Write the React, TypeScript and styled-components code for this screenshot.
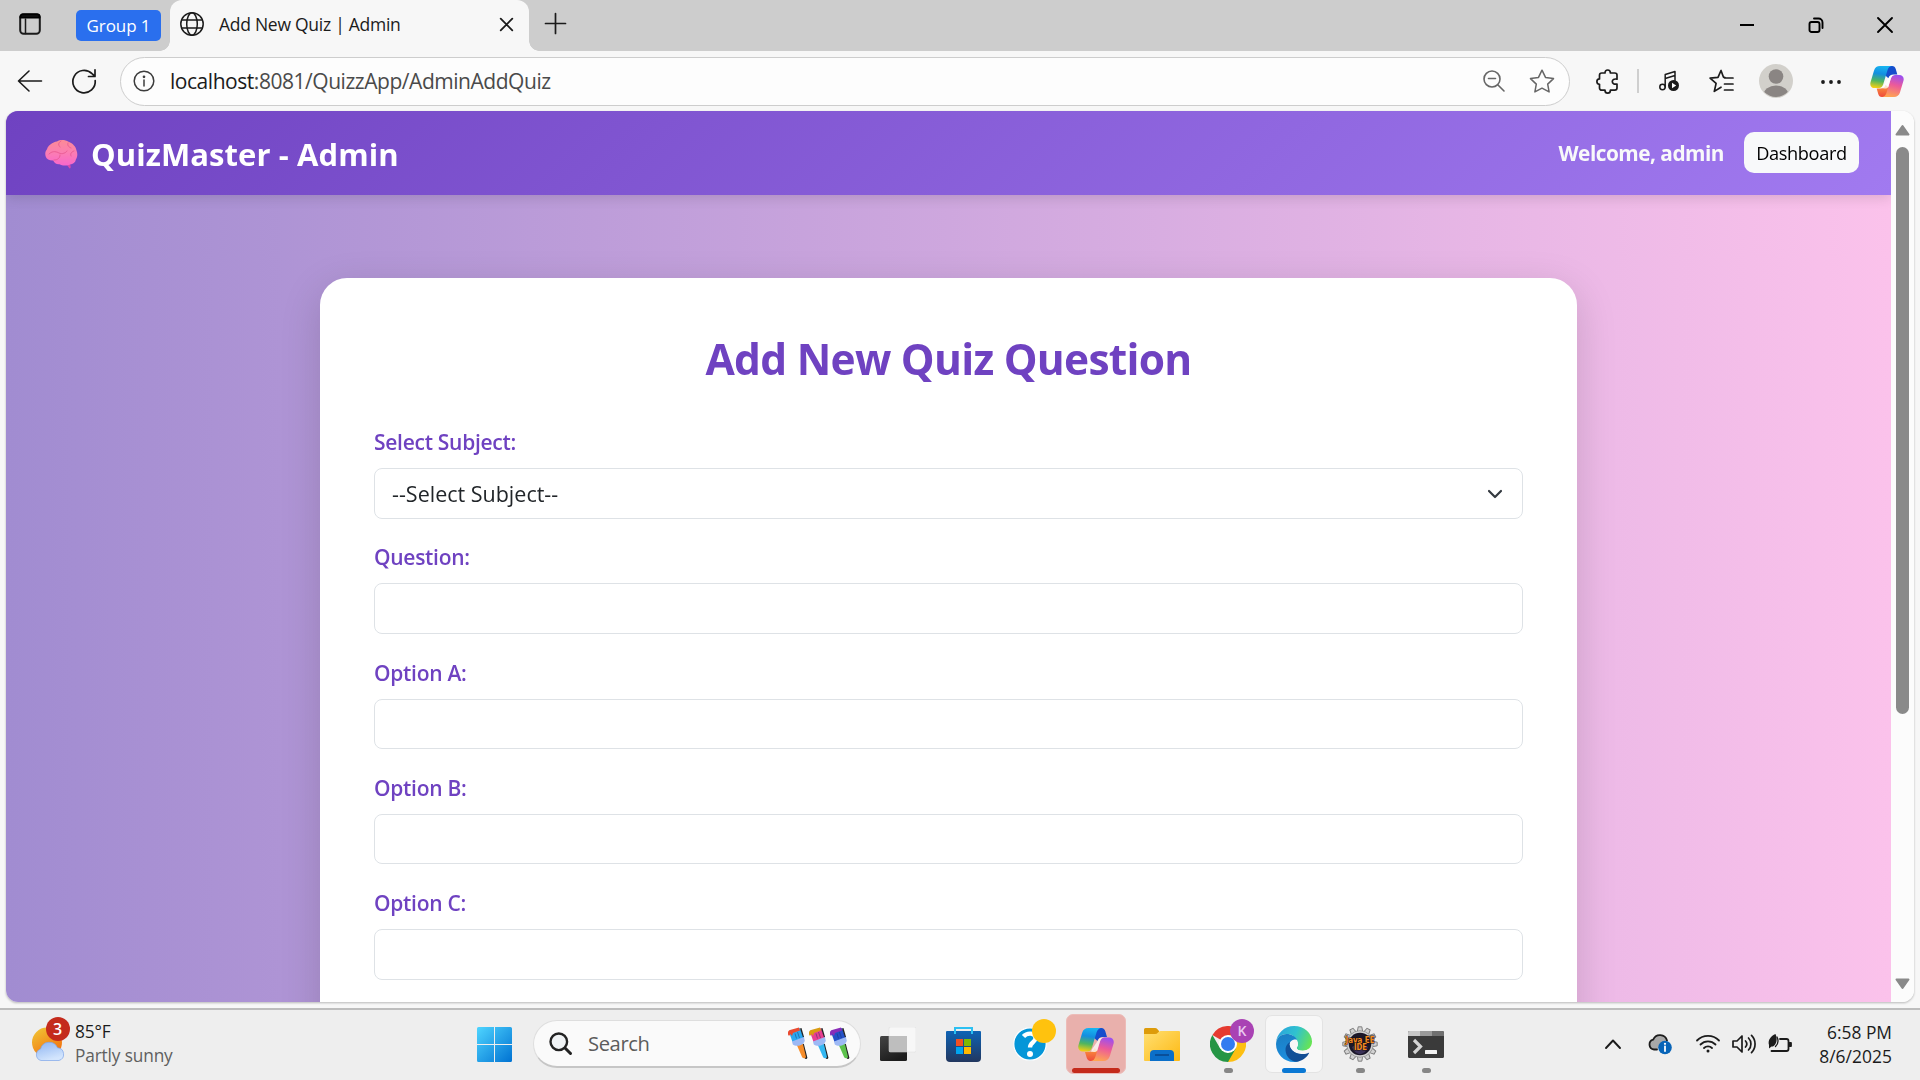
import React from "react";
import styled, { createGlobalStyle, css } from "styled-components";

const Global = createGlobalStyle`
  * { box-sizing: border-box; }
  html, body { margin: 0; padding: 0; }
  body { width: 1920px; height: 1080px; overflow: hidden; font-family: "Open Sans", "Noto Sans", sans-serif; }
  svg { display: block; flex: none; }
`;

const Screen = styled.div`
  width: 1920px;
  height: 1080px;
  display: flex;
  flex-direction: column;
  background: #f7f7f7;
  overflow: hidden;
`;

const Label = styled.span<{ $size: number; $color?: string; $weight?: number; $track?: number }>`
  font-size: ${(p) => p.$size}px;
  color: ${(p) => p.$color ?? "#1b1b1b"};
  font-weight: ${(p) => p.$weight ?? 400};
  letter-spacing: ${(p) => p.$track ?? 0}px;
  line-height: 24px;
  white-space: pre;
`;

/* ---------- tab strip ---------- */
const TabStrip = styled.header`
  flex: none;
  height: 51px;
  display: flex;
  align-items: flex-start;
  background: #cdcdcd;
  padding-left: 19px;
`;
const StripIcon = styled.div<{ $top: number; $left?: number }>`
  padding-top: ${(p) => p.$top}px;
  margin-left: ${(p) => p.$left ?? 0}px;
`;
const GroupChip = styled.div`
  width: 85px;
  height: 31px;
  margin: 10px 9px 0 35px;
  border-radius: 5px;
  background: #2a6fee;
  display: flex;
  align-items: center;
  justify-content: center;
`;
const Tab = styled.div`
  position: relative;
  width: 359px;
  height: 51px;
  padding: 12px 16px 0 10px;
  display: flex;
  align-items: flex-start;
  border-radius: 12px 12px 0 0;
  background: #f7f7f7;
  &::before, &::after {
    content: "";
    position: absolute;
    bottom: 0;
    width: 10px;
    height: 10px;
  }
  &::before { left: -10px; background: radial-gradient(circle at 0 0, transparent 9.5px, #f7f7f7 10px); }
  &::after { right: -10px; background: radial-gradient(circle at 100% 0, transparent 9.5px, #f7f7f7 10px); }
`;
const TabTitle = styled.div`
  flex: 1;
  margin-left: 15px;
`;
const TabClose = styled.div`
  padding-top: 6px;
`;
const WindowControls = styled.div`
  margin-left: auto;
  padding: 17px 27px 0 0;
  display: flex;
  gap: 53px;
`;

/* ---------- toolbar ---------- */
const Toolbar = styled.nav`
  flex: none;
  height: 60px;
  display: flex;
  align-items: center;
  padding: 0 14px 0 17px;
`;
const AddressBar = styled.div`
  width: 1450px;
  height: 49px;
  margin: 0 25px 0 23px;
  border: 1.5px solid #cdcdcd;
  border-radius: 25px;
  background: #fdfdfd;
  display: flex;
  align-items: center;
  padding: 0 14px 0 12px;
`;
const Url = styled.div`
  flex: 1;
  margin-left: 15px;
`;
const ToolbarIcon = styled.div<{ $left: number }>`
  margin-left: ${(p) => p.$left}px;
`;
const Divider = styled.div`
  width: 2px;
  height: 24px;
  margin-left: 19px;
  background: #cfcfcf;
`;

/* ---------- page ---------- */
const Viewport = styled.main`
  flex: none;
  height: 891px;
  margin: 0 6px;
  display: flex;
  border-radius: 12px;
  overflow: hidden;
  background: #fff;
`;
const ViewportFrame = styled.div`
  flex: none;
  height: 897px;
  filter: drop-shadow(0 1px 1px rgba(0, 0, 0, 0.25));
`;
const Page = styled.div`
  width: 1885px;
  height: 891px;
  display: flex;
  flex-direction: column;
  background: linear-gradient(to right, #a18cd1, #fbc2eb);
  overflow: hidden;
`;
const Navbar = styled.div`
  flex: none;
  height: 84px;
  display: flex;
  align-items: center;
  padding: 0 32px 0 39px;
  background: linear-gradient(135deg, #6f42c1, #a17af0);
  box-shadow: 0 3px 12px rgba(0, 0, 0, 0.12);
`;
const Brand = styled.div`
  flex: 1;
  display: flex;
  align-items: center;
  gap: 13px;
  padding-top: 2px;
`;
const DashboardButton = styled.button`
  width: 115px;
  height: 41px;
  margin: 0 0 2px 20px;
  padding: 1px 0 0;
  border: 0;
  border-radius: 10px;
  background: #f8f9fa;
  font-family: inherit;
`;
const Card = styled.form`
  flex: none;
  width: 1257px;
  height: 1100px;
  margin: 83px 0 0 314px;
  padding: 55px 54px;
  border-radius: 27px;
  background: #fff;
  box-shadow: 0 11px 40px rgba(0, 0, 0, 0.15);
`;
const Title = styled.h1`
  margin: 0 0 37px;
  height: 52px;
  display: flex;
  align-items: center;
  justify-content: center;
`;
const Field = styled.div`
  height: 115.25px;
  padding-top: 8px;
  display: flex;
  flex-direction: column;
`;
const FieldLabel = styled.label`
  height: 24px;
  margin: 0 0 14px;
`;
const Control = styled.div`
  height: 50.5px;
  display: flex;
  align-items: center;
  justify-content: space-between;
  padding: 1px 19px 0 17px;
  border: 1px solid #dee2e6;
  border-radius: 8px;
  background: #fff;
`;
const Scrollbar = styled.div`
  width: 23px;
  background: #fcfcfc;
  display: flex;
  flex-direction: column;
  align-items: center;
  justify-content: space-between;
  padding: 13px 1px 12px 0;
`;
const Thumb = styled.div`
  width: 13px;
  height: 567px;
  margin: 11px 0 auto;
  border-radius: 7px;
  background: #8a8a8a;
`;

/* ---------- taskbar ---------- */
const Taskbar = styled.footer`
  flex: none;
  height: 72px;
  border-top: 2px solid #bdbdbd;
  padding-bottom: 2px;
  background: #eeeeee;
  display: flex;
  align-items: center;
`;
const Weather = styled.div`
  width: 461px;
  padding-left: 32px;
  display: flex;
  align-items: center;
`;
const Lines = styled.div<{ $end?: boolean }>`
  display: flex;
  flex-direction: column;
  ${(p) => p.$end && css`align-items: flex-end;`}
`;
const Slot = styled.div`
  position: relative;
  width: 66px;
  height: 68px;
  display: flex;
  align-items: center;
  justify-content: center;
`;
const Tile = styled.div<{ $w: number; $h: number; $bg: string; $edge: string }>`
  width: ${(p) => p.$w}px;
  height: ${(p) => p.$h}px;
  display: flex;
  align-items: center;
  justify-content: center;
  border-radius: 7px;
  background: ${(p) => p.$bg};
  border: 1px solid ${(p) => p.$edge};
`;
const Indicator = styled.div<{ $w: number; $c: string }>`
  position: absolute;
  bottom: 5px;
  left: 50%;
  width: ${(p) => p.$w}px;
  height: 5px;
  margin-left: ${(p) => -p.$w / 2}px;
  border-radius: 3px;
  background: ${(p) => p.$c};
`;
const Badge = styled.div<{ $bg: string; $x: number; $y: number }>`
  position: absolute;
  left: ${(p) => p.$x}px;
  top: ${(p) => p.$y}px;
  width: 24px;
  height: 24px;
  border-radius: 50%;
  background: ${(p) => p.$bg};
  display: flex;
  align-items: center;
  justify-content: center;
`;
const WeatherIcon = styled.div`
  position: relative;
  margin-right: 10px;
`;
const SearchBox = styled.div`
  width: 328px;
  height: 48px;
  margin: 0 4px 0 6px;
  padding: 0 10px 0 15px;
  display: flex;
  align-items: center;
  border: 1.5px solid #dedede;
  border-bottom: 2px solid #c6c6c6;
  border-radius: 24px;
  background: #fafafa;
`;
const SearchText = styled.div`
  flex: 1;
  margin-left: 16px;
`;
const Tray = styled.div`
  margin-left: auto;
  padding-right: 28px;
  display: flex;
  align-items: center;
`;
const TrayIcon = styled.div<{ $gap: number }>`
  margin-right: ${(p) => p.$gap}px;
`;
const Clock = styled(Lines)`
  width: 75px;
`;

type IconProps = { w: number; h: number; children: React.ReactNode; stroke?: string; sw?: number };
const Icon = ({ w, h, children, stroke = "#1b1b1b", sw = 1.6 }: IconProps) => (
  <svg width={w} height={h} viewBox={`0 0 ${w} ${h}`} fill="none" stroke={stroke} strokeWidth={sw} strokeLinecap="round" strokeLinejoin="round" overflow="visible">
    {children}
  </svg>
);

const Copilot = ({ id, w, h }: { id: string; w: number; h: number }) => (
  <svg width={w} height={h} viewBox="0 0 36 33">
    <defs>
      <linearGradient id={id + "a"} x1="0.5" y1="0" x2="0.35" y2="1">
        <stop offset="0" stopColor="#18b4f0" /><stop offset="0.35" stopColor="#138ee0" /><stop offset="0.68" stopColor="#4fb560" /><stop offset="1" stopColor="#f5cf12" />
      </linearGradient>
      <linearGradient id={id + "b"} x1="0.65" y1="0" x2="0.4" y2="1">
        <stop offset="0" stopColor="#9b4ff0" /><stop offset="0.45" stopColor="#ec5a9a" /><stop offset="1" stopColor="#ffa552" />
      </linearGradient>
      <linearGradient id={id + "c"} x1="0" y1="0" x2="1" y2="1">
        <stop offset="0" stopColor="#0f52d0" /><stop offset="1" stopColor="#1b49c9" />
      </linearGradient>
      <linearGradient id={id + "d"} x1="0" y1="0" x2="0" y2="1">
        <stop offset="0" stopColor="#fb9a3c" /><stop offset="1" stopColor="#ef4a3d" />
      </linearGradient>
    </defs>
    <path d="M17 0h6.500c2 0 3.200 1.300 3.800 3.200L29 9h-4c-3 0-4.600 1.200-5.500 4L15 9z" fill={`url(#${id}c)`} />
    <path d="M19 33h-6.500c-2 0-3.200-1.300-3.800-3.200L7 24h4c3 0 4.600-1.200 5.500-4L21 24z" fill={`url(#${id}d)`} />
    <path d="M10.500 0H23c-2.200.3-3.700 2-4.400 4.300l-4.600 15.200c-.8 2.500-2.200 4-4.500 4H5C1.500 23.500-.4 21 .4 17.500L4.200 4.700C5.200 1.500 7.400 0 10.500 0z" fill={`url(#${id}a)`} />
    <path d="M25.500 33H13c2.200-.3 3.700-2 4.400-4.300l4.600-15.200c.8-2.500 2.200-4 4.500-4H31c3.500 0 5.400 2.500 4.600 6l-3.800 12.800c-1 3.200-3.200 4.700-6.300 4.700z" fill={`url(#${id}b)`} />
    <path d="M20.300 12c.9-1.800 2.400-2.500 4.700-2.500l1.500 0c-2.300 0-3.700 1.500-4.500 4l-2.700 9c-.8 1-1.800 1.500-3.600 1.500l-2.700-.3c.5-.8.8-1.600 1-2.500z" fill="#fff" fillOpacity=".75" />
  </svg>
);

const Brain = () => (
  <svg width="33" height="29" viewBox="0 0 33 29">
    <defs>
      <linearGradient id="brainFill" x1="0.5" y1="0" x2="0.5" y2="1">
        <stop offset="0" stopColor="#fb8b96" /><stop offset="0.5" stopColor="#fb7db3" /><stop offset="1" stopColor="#f866cc" />
      </linearGradient>
    </defs>
    <path d="M20.500 23l4 5.600c1.200-.3 1.500-1.600 1-2.800l-.8-4z" fill="#d94aac" />
    <path d="M12 1.500C15.500-.5 20-.3 23.500 1.800 28 3.500 31 7 31.500 10.500c1.300 3 1 6.500-.5 8.800-.6 3.200-3 5-6 5.200-3 1.600-8 1.400-10.500-.3-3 .3-5.300-1.200-6.300-3.800-3.600.2-6.700-1.200-7.500-4C-.3 13.500.5 11 2 9.200 3 5.500 7.500 2 12 1.500z" fill="url(#brainFill)" />
    <g fill="none" stroke="#e85a92" strokeWidth="0.9" strokeLinecap="round">
      <path d="M4 14c4-4 8-2 10-1 3 1.500 7 0 8-2M16 1c-3 2-3 4-1 6M23 3c-1 3 1 4 3 5M29 11c-3 1-4 3-3 5M9 20c4 0 6-2 6-5" />
    </g>
  </svg>
);

const Brush = ({ head, drip, handle }: { head: string; drip: string; handle: string }) => (
  <svg width="21" height="33" viewBox="0 0 21 33">
    <path d="M12 17.500l4-1 3.600 14c-.6 1.600-2.200 1.500-2.800.3z" fill="#222" transform="translate(.8 .3)" />
    <path d="M9.800 18l6-1.500L19 30c-.6 1.700-3 1.600-3.800.3z" fill={handle} />
    <path d="M2 5L13 1l4 10-11.500 4z" fill={head} />
    <path d="M1 7.500V5.500c0-1.500 1-2.200 2-2.600L12 .6l1 3-7 2.400-1 3-1.500-2L2 9z" fill={drip} />
    <path d="M13 1.500l1.500-.5 2.500 9-1 .5z" fill="#222" />
    <path d="M5 14.500l12-4.500.8 4c-1 2.400-2.600 3.800-5 4.500-2.300.6-5.600.4-7-1z" fill="#9db9f5" />
    <path d="M8 6.500l1.500 5M10.500 5l2 6" stroke="#15306a" strokeOpacity=".45" fill="none" />
  </svg>
);

const Gear = () => {
  const teeth = Array.from({ length: 12 }, (_, i) => i * 30);
  return (
    <svg width="36" height="36" viewBox="0 0 36 36">
      {teeth.map((a) => (
        <path key={a} d="M15.300 5.500L16.200.8h3.600l.9 4.700z" fill="#d2d2d2" stroke="#777" strokeWidth="0.9" transform={`rotate(${a} 18 18)`} />
      ))}
      <circle cx="18" cy="18" r="13.300" fill="#d2d2d2" stroke="#888" strokeWidth="0.700" />
      <circle cx="18" cy="18" r="11.300" fill="#1b1728" />
      <path d="M10 21c4-3 12-3 16 0-2 5-5 7-8 7s-6-2-8-7z" fill="#3a3157" />
      <text x="18" y="16.500" textAnchor="middle" textLength="29" lengthAdjust="spacingAndGlyphs" fontSize="8" fontWeight="700" fontFamily="DejaVu Sans" fill="#f58a1f" stroke="#1b1010" strokeWidth="1" paintOrder="stroke">Java EE</text>
      <text x="18.500" y="24" textAnchor="middle" textLength="13" lengthAdjust="spacingAndGlyphs" fontSize="8" fontWeight="700" fontFamily="DejaVu Sans" fill="#f58a1f" stroke="#1b1010" strokeWidth="1" paintOrder="stroke">IDE</text>
    </svg>
  );
};

const Edge = () => (
  <svg width="36" height="36" viewBox="0 0 36 36">
    <defs>
      <linearGradient id="edTop" x1="0" y1="0.3" x2="1" y2="0.6"><stop offset="0" stopColor="#2aa3dd" /><stop offset="0.5" stopColor="#30c2cf" /><stop offset="1" stopColor="#67e454" /></linearGradient>
      <linearGradient id="edMid" x1="0.3" y1="0" x2="0.5" y2="1"><stop offset="0" stopColor="#1b7fc4" /><stop offset="1" stopColor="#1d8fe0" /></linearGradient>
      <linearGradient id="edLow" x1="0" y1="0" x2="1" y2="1"><stop offset="0" stopColor="#10529c" /><stop offset="1" stopColor="#134c92" /></linearGradient>
    </defs>
    <path d="M0 17C.6 7.500 8.500 0 18 0c10.500 0 18 7.500 18 15.500 0 5.500-4 9.300-9.300 9.300-4 0-6-1.500-6-2.800 0-1 1.300-1.600 1.300-4C22 13 17 8 10.500 8 5 8 1 11.500 0 17z" fill="url(#edTop)" />
    <path d="M0 18C.5 11.500 5 8 10.500 8c5 0 9 2.500 10.800 6-4-1.500-7.600 1.500-8 5-.8 7 4 14 12 14.400C23 35 20.500 36 18 36 8 36 0 28 0 18z" fill="url(#edMid)" />
    <path d="M13.800 16c-3 2-4.600 5-4.300 8.500C10 31 15 35.500 20.500 35.800c5.500-.8 10-4 12.500-8.600.4-.9-.2-1.200-.9-.9-2 1-4.300 1.500-6.600 1.300-7-.4-12.500-5-11.700-11.600z" fill="url(#edLow)" />
    <path d="M17.500 14.200c2.500-.5 4.500 1.300 4.500 3.800 0 2.400-1.300 3-1.300 4 0 1.300 2 2.800 6 2.800 2.800 0 5-.8 6.300-2l.2 3.600c-2.500 1.300-5 1.700-7.700 1.500-7-.6-11.700-5-11.700-9.500 0-2.200 1.600-3.900 3.700-4.200z" fill="#f7f7f7" />
  </svg>
);

const App = () => (
  <Screen>
    <Global />
    <TabStrip>
      <StripIcon $top={13}>
        <Icon w={22} h={22} sw={2}><rect x="1.200" y="1.200" width="19.600" height="19.600" rx="3.500" /><path d="M1.500 4.500V3.500a2 2 0 0 1 2-2h15a2 2 0 0 1 2 2v1z" fill="#1b1b1b" stroke="#000" /><path d="M6.500 6v14.500" strokeWidth="1.500" /></Icon>
      </StripIcon>
      <GroupChip><Label $size={17} $track={-0.1} $color="#fff">Group 1</Label></GroupChip>
      <Tab>
        <Icon w={24} h={24} sw={1.5}><circle cx="12" cy="12" r="11.200" /><ellipse cx="12" cy="12" rx="5.300" ry="11.200" /><path d="M1.800 8h20.400M1.800 16h20.400" /></Icon>
        <TabTitle><Label $size={17.5} $track={-0.27}>Add New Quiz | Admin</Label></TabTitle>
        <TabClose><Icon w={13} h={13} sw={1.8}><path d="M.7.7l11.600 11.600M12.300.7L.7 12.300" /></Icon></TabClose>
      </Tab>
      <StripIcon $top={13} $left={16}><Icon w={21} h={21} sw={1.7}><path d="M10.500.5v20M.5 10.500h20" /></Icon></StripIcon>
      <WindowControls>
        <Icon w={16} h={16} stroke="#000" sw={2}><path d="M1 8h14" strokeLinecap="butt" /></Icon>
        <Icon w={16} h={16} stroke="#000" sw={1.9}><rect x="1.500" y="5" width="10" height="10" rx="2" /><path d="M6 1.500h4.500a4 4 0 0 1 4 4V11" /></Icon>
        <Icon w={16} h={16} stroke="#000" sw={1.9}><path d="M1 1l14 14M15 1L1 15" /></Icon>
      </WindowControls>
    </TabStrip>

    <Toolbar>
      <Icon w={26} h={24} sw={1.6}><path d="M24.500 12H1.500M12 2L1.500 12 12 22" /></Icon>
      <ToolbarIcon $left={29}><Icon w={25} h={25} sw={1.7}><path d="M23.200 11.500A11.200 11.200 0 1 1 20 4.700l2.600 2.300M23 .8V7.500h-6.500" /></Icon></ToolbarIcon>
      <AddressBar>
        <Icon w={22} h={22} stroke="#3c3c3c" sw={1.5}><circle cx="11" cy="11" r="9.800" /><path d="M11 10v6" /><circle cx="11" cy="6.800" r=".6" fill="#3c3c3c" /></Icon>
        <Url><Label $size={21} $track={-0.46}>localhost</Label><Label $size={21} $track={-0.46} $color="#4a4a4a">:8081/QuizzApp/AdminAddQuiz</Label></Url>
        <Icon w={22} h={22} stroke="#666" sw={1.6}><circle cx="9" cy="9" r="8" /><path d="M15 15l6 6M5.500 8.500h7" /></Icon>
        <ToolbarIcon $left={24}><Icon w={26} h={24} stroke="#666" sw={1.5}><path d="M13 1.200l3.500 7.200 8 1.200-5.800 5.500 1.400 7.800L13 19.200l-7.100 3.700 1.400-7.800L1.500 9.600l8-1.200z" /></Icon></ToolbarIcon>
      </AddressBar>
      <ToolbarIcon $left={1}><Icon w={22} h={25} sw={1.7}><path d="M5.800 4h3.200c0-2 1-3 2.700-3s2.700 1 2.700 3h4.300c1.300 0 2.300.8 2.300 2v4.200c-3-.6-4.700.4-4.700 2.400s1.700 3 4.700 2.400V19c0 1.300-1 2.200-2.300 2.200h-4.300c0 2-1 3-2.700 3s-2.700-1-2.700-3H5.800C4.500 21.200 3.500 20.300 3.500 19v-3.700C2 15.300.9 14.300.9 12.600S2 9.900 3.500 9.900V6.200C3.500 5 4.500 4 5.800 4z" /></Icon></ToolbarIcon>
      <Divider />
      <ToolbarIcon $left={20}>
        <Icon w={21} h={22} sw={1.5}><circle cx="3.500" cy="17" r="2.700" /><path d="M6.200 17V4.500L16 1.500v9M6.200 8.500L16 5.500" /><circle cx="14.500" cy="15.500" r="5.500" fill="#1b1b1b" stroke="none" /><path d="M13 12.800v5.400l4.200-2.700z" fill="#fff" stroke="none" /></Icon>
      </ToolbarIcon>
      <ToolbarIcon $left={29}>
        <Icon w={25} h={24} sw={1.7}><path d="M16 8.500l-1.500-.3L12 1.500 9 8.400l-7.900.8 6 5.200-1.800 8L12 18.200M15.500 9h8.500M15.500 15h8.500M15.500 21h8.500" /></Icon>
      </ToolbarIcon>
      <ToolbarIcon $left={25}>
        <svg width="34" height="34" viewBox="0 0 34 34"><defs><clipPath id="av"><circle cx="17" cy="17" r="16" /></clipPath></defs><circle cx="17" cy="17" r="17" fill="#d2d0cb" /><circle cx="17" cy="12.500" r="7.300" fill="#8a8583" /><ellipse cx="17" cy="31" rx="12.500" ry="9.500" fill="#8a8583" clipPath="url(#av)" /></svg>
      </ToolbarIcon>
      <ToolbarIcon $left={28}><Icon w={20} h={6} stroke="none"><g fill="#1b1b1b"><circle cx="2" cy="4" r="1.900" /><circle cx="10" cy="4" r="1.900" /><circle cx="18" cy="4" r="1.900" /></g></Icon></ToolbarIcon>
      <ToolbarIcon $left={29}><Copilot id="tb" w={34} h={31} /></ToolbarIcon>
    </Toolbar>

    <ViewportFrame>
      <Viewport>
        <Page>
          <Navbar>
            <Brand><Brain /><Label $size={31} $track={0.08} $weight={700} $color="#fff">QuizMaster - Admin</Label></Brand>
            <Label $size={20.8} $track={-0.5} $weight={700} $color="#f8f9fa">Welcome, admin</Label>
            <DashboardButton type="button"><Label $size={18.2} $track={-0.38} $color="#000">Dashboard</Label></DashboardButton>
          </Navbar>
          <Card>
            <Title><Label $size={42.5} $track={-0.73} $weight={700} $color="#6f42c1">Add New Quiz Question</Label></Title>
            {["Select Subject:", "Question:", "Option A:", "Option B:", "Option C:"].map((name, i) => (
              <Field key={name}>
                <FieldLabel><Label $size={21} $track={-0.28} $weight={600} $color="#6f42c1">{name}</Label></FieldLabel>
                <Control>
                  {i === 0 && (
                    <>
                      <Label $size={21.5} $color="#212529">--Select Subject--</Label>
                      <Icon w={16} h={10} stroke="#343a40" sw={2.2}><path d="M2 2l6 6 6-6" /></Icon>
                    </>
                  )}
                </Control>
              </Field>
            ))}
          </Card>
        </Page>
        <Scrollbar>
          <svg width="15" height="12" viewBox="0 0 15 12"><path d="M7.500 2L13.500 10.500h-12z" fill="#8a8a8a" stroke="#8a8a8a" strokeWidth="2" strokeLinejoin="round" /></svg>
          <Thumb />
          <svg width="15" height="12" viewBox="0 0 15 12"><path d="M7.500 10L13.500 1.500h-12z" fill="#8a8a8a" stroke="#8a8a8a" strokeWidth="2" strokeLinejoin="round" /></svg>
        </Scrollbar>
      </Viewport>
    </ViewportFrame>

    <Taskbar>
      <Weather>
        <WeatherIcon>
          <svg width="33" height="34" viewBox="0 0 33 34">
            <defs>
              <linearGradient id="sun" x1="0.2" y1="0" x2="0.8" y2="1"><stop offset="0" stopColor="#f0c233" /><stop offset="1" stopColor="#f2680c" /></linearGradient>
              <linearGradient id="cloud" x1="0" y1="0" x2="0.4" y2="1"><stop offset="0" stopColor="#8db4f2" /><stop offset="1" stopColor="#d3e5fd" /></linearGradient>
            </defs>
            <circle cx="15" cy="15.500" r="15" fill="url(#sun)" />
            <path d="M9 33.500a6 6 0 0 1-.5-11.500 9 9 0 0 1 17-1.200A6.500 6.500 0 0 1 27 33.500z" fill="url(#cloud)" stroke="#7da5ea" strokeWidth=".7" />
          </svg>
          <Badge $bg="#c42b1c" $x={13.5} $y={-10}><Label $size={16} $color="#fff" $weight={600}>3</Label></Badge>
        </WeatherIcon>
        <Lines><Label $size={17.3} $track={-0.15}>85°F</Label><Label $size={17.3} $track={-0.15} $color="#5f5f5f">Partly sunny</Label></Lines>
      </Weather>
      <Slot>
        <svg width="35" height="35" viewBox="0 0 35 35">
          <defs><linearGradient id="win" x1="0" y1="0" x2="1" y2="1" gradientUnits="objectBoundingBox"><stop offset="0" stopColor="#4fd5ff" /><stop offset="1" stopColor="#0072d2" /></linearGradient></defs>
          <path d="M1.500 0H17v17H0V1.500Q0 0 1.500 0zM18 0h15.500Q35 0 35 1.500V17H18zM0 18h17v17H1.500Q0 35 0 33.500zM18 18h17v15.500q0 1.500-1.500 1.500H18z" fill="url(#win)" />
        </svg>
      </Slot>
      <SearchBox>
        <Icon w={23} h={23} stroke="#222" sw={2.4}><circle cx="9.800" cy="9.800" r="8.300" fill="#f0f3f5" /><path d="M16 16l5.500 5.500" strokeWidth="3" /></Icon>
        <SearchText><Label $size={20.2} $track={-0.4} $color="#5c5c5c">Search</Label></SearchText>
        <Brush head="#2ba8f0" drip="#ea4a30" handle="#f78d2a" />
        <Brush head="#e83e90" drip="#d99b12" handle="#34b8f2" />
        <Brush head="#2450c8" drip="#8a2cb8" handle="#5cc24c" />
      </SearchBox>
      <Slot>
        <svg width="36" height="34" viewBox="0 0 36 34">
          <defs><linearGradient id="tv" x1="0" y1="0" x2="0.5" y2="1"><stop offset="0" stopColor="#444" /><stop offset="1" stopColor="#1c1c1c" /></linearGradient></defs>
          <rect y="9" width="27" height="25" rx="1.500" fill="url(#tv)" /><rect x="9" width="27" height="25" rx="1.500" fill="#f7f7f7" stroke="#dcdcdc" strokeWidth=".5" /><path d="M9 9h18v16H10.500Q9 25 9 23.500z" fill="#bebebe" />
        </svg>
      </Slot>
      <Slot>
        <svg width="36" height="35" viewBox="0 0 36 35">
          <defs><linearGradient id="st" x1="0" y1="0" x2="0" y2="1"><stop offset="0" stopColor="#0e63b5" /><stop offset="1" stopColor="#22375f" /></linearGradient></defs>
          <path d="M0 5q0-1 1-1h33q1 0 1 1v26q0 4-4 4H4q-4 0-4-4z" fill="url(#st)" /><path d="M9 7V1h17v6" fill="none" stroke="#2bc0f2" strokeWidth="2" />
          <path d="M10 12h7v7h-7z" fill="#f25022" /><path d="M18 12h7v7h-7z" fill="#7fba00" /><path d="M10 20h7v7h-7z" fill="#00a4ef" /><path d="M18 20h7v7h-7z" fill="#ffb900" />
        </svg>
      </Slot>
      <Slot>
        <svg width="34" height="34" viewBox="0 0 34 34"><circle cx="17" cy="17" r="16.200" fill="#0596d8" stroke="#fff" strokeWidth="1.200" /><path d="M10.500 9.500C14 5.500 22.500 5.500 22.500 11c0 4.500-5.500 4.500-5.500 9.500" fill="none" stroke="#fff" strokeWidth="4.300" /><circle cx="17" cy="27" r="3" fill="#fff" /></svg>
        <Badge $bg="#ffc20e" $x={35} $y={9} />
      </Slot>
      <Slot>
        <Tile $w={60} $h={60} $bg="#e9b0ac" $edge="#edbcb8"><Copilot id="tk" w={36} h={33} /></Tile>
        <Indicator $w={48} $c="#c42b1c" />
      </Slot>
      <Slot>
        <svg width="36" height="33" viewBox="0 0 36 33">
          <defs><linearGradient id="fo" x1="0" y1="0" x2="1" y2="1"><stop offset="0" stopColor="#ffdf72" /><stop offset="1" stopColor="#fdb913" /></linearGradient></defs>
          <path d="M0 1.500Q0 0 1.500 0H11q1.500 0 2.500 1.200L15 3v4H0z" fill="#dd9b0a" /><path d="M0 6h11q2 0 3-1.500T16.500 3H35q1 0 1 1v28q0 1-1 1H1q-1 0-1-1z" fill="url(#fo)" /><path d="M6 33v-7q0-4 4-4h16q4 0 4 4v7z" fill="#0b6fc9" /><path d="M11 27h14" stroke="#0a4c93" strokeWidth="1.800" />
        </svg>
      </Slot>
      <Slot>
        <svg width="36" height="36" viewBox="0 0 36 36">
          <path d="M18 18L2.400 9A18 18 0 0 1 33.600 9z" fill="#e53a30" /><path d="M18 18V9h15.600A18 18 0 0 1 18 36z" fill="#fdbf12" /><path d="M2.400 9l7.800 13.500L18 27l7.800-4.500L18 36A18 18 0 0 1 2.400 9z" fill="#259545" /><circle cx="18" cy="18" r="9" fill="#fff" /><circle cx="18" cy="18" r="7" fill="#327cf0" />
        </svg>
        <Badge $bg="#a942b4" $x={35} $y={9}><Label $size={14} $color="#e9c9ee" $weight={600}>K</Label></Badge>
        <Indicator $w={9} $c="#868686" />
      </Slot>
      <Slot>
        <Tile $w={58} $h={58} $bg="#f7f7f7" $edge="#e3e3e3"><Edge /></Tile>
        <Indicator $w={24} $c="#0a78d4" />
      </Slot>
      <Slot><Gear /><Indicator $w={9} $c="#868686" /></Slot>
      <Slot>
        <svg width="36" height="27" viewBox="0 0 36 27"><rect width="36" height="27" rx="1.500" fill="#3a3a3a" /><path d="M0 5V1.500Q0 0 1.500 0H12v5z" fill="#c6c6c6" /><path d="M12 0h12v5H12z" fill="#999" /><path d="M24 0h10.500Q36 0 36 1.500V5H24z" fill="#707070" /><path d="M6 9l6.500 6.500L6 22" fill="none" stroke="#d4d4d4" strokeWidth="3.200" /><rect x="17" y="19" width="12" height="4" rx=".6" fill="#f2f2f2" /></svg>
        <Indicator $w={9} $c="#868686" />
      </Slot>
      <Tray>
        <TrayIcon $gap={27}><Icon w={16} h={10} sw={1.9}><path d="M1 9l7-7.500L15 9" /></Icon></TrayIcon>
        <TrayIcon $gap={24}>
          <Icon w={24} h={22} sw={1.8}><path d="M9 16.500H6a5 5 0 0 1-.8-9.800 7.300 7.300 0 0 1 13.800.8" fill="#a8a8a8" /><circle cx="17" cy="14.500" r="6.800" fill="#0764b8" stroke="none" /><path d="M17 13.500v4.500" stroke="#fff" /><circle cx="17" cy="10.800" r="1.100" fill="#fff" stroke="none" /></Icon>
        </TrayIcon>
        <TrayIcon $gap={12}><Icon w={24} h={20} sw={1.8}><path d="M1 6.500a15.500 15.500 0 0 1 22 0M4.500 10.500a10.600 10.600 0 0 1 15 0M8 14a5.700 5.700 0 0 1 8 0" /><circle cx="12" cy="17" r="1.500" fill="#1b1b1b" stroke="none" /></Icon></TrayIcon>
        <TrayIcon $gap={12}><Icon w={24} h={20} sw={1.7}><path d="M1 7h4l5-5v16l-5-5H1zM13.500 7a4.500 4.500 0 0 1 0 6M16.500 4a8.600 8.600 0 0 1 0 12M19.500 1.300a12.400 12.400 0 0 1 0 17.400" /></Icon></TrayIcon>
        <TrayIcon $gap={25}><Icon w={24} h={22} sw={1.8}><path d="M12 6h6.500a2 2 0 0 1 2 2v8a2 2 0 0 1-2 2H3.500" /><path d="M21.500 10h1.500v3h-1.500z" fill="#1b1b1b" /><path d="M1 12C-.5 7 3 3 7.500 1c2 5 1.500 10-2.500 12.500H3.500L1 15.500z" fill="#1b1b1b" stroke="none" /><path d="M9 4c1.500 3 1 7-1.500 9.500" strokeWidth="1.300" /></Icon></TrayIcon>
        <Clock $end><Label $size={17.4}>6:58 PM</Label><Label $size={17.4} $track={0.05}>8/6/2025</Label></Clock>
      </Tray>
    </Taskbar>
  </Screen>
);

export default App;
